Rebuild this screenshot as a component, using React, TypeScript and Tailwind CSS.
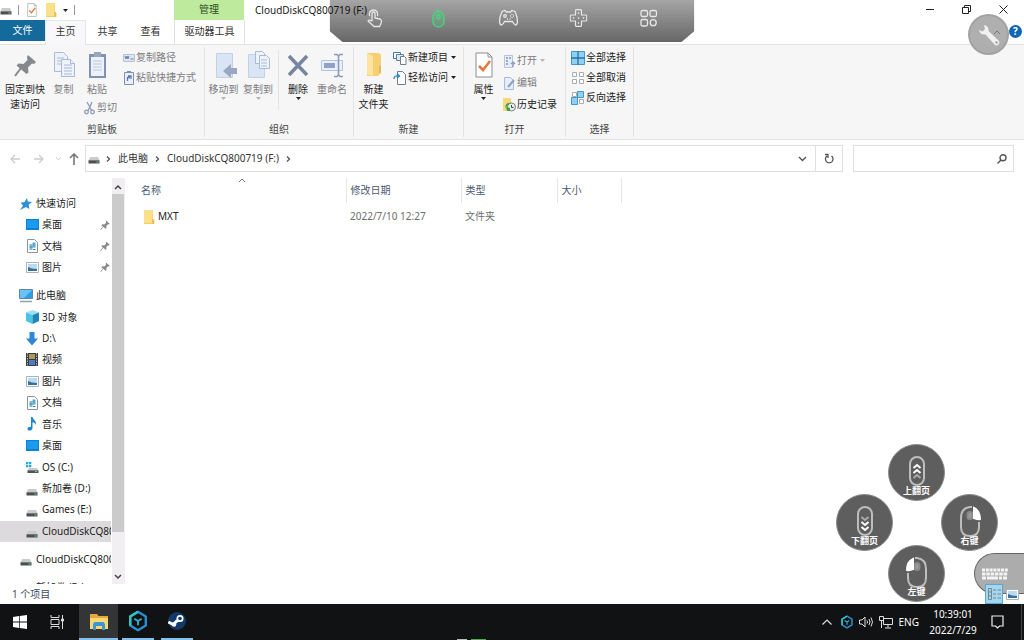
import type { ReactNode } from "react";

type IconProps = { className?: string };

/* ---------- icons ---------- */

const DriveIcon = ({ className = "w-3 h-3" }: IconProps) => (
  <svg viewBox="0 0 12 12" className={className}>
    <path d="M2 4h8l1.5 3.5h-11z" fill="#c9cccc" />
    <path d="M.5 7.3h11v3.2H.5z" fill="#4a4f52" />
    <path d="M8.5 9h2" stroke="#7fd18d" />
  </svg>
);

const OsDriveIcon = () => (
  <svg viewBox="0 0 13 13" className="w-[13px] h-[13px]">
    <path d="M0 1h2.3v2.3H0zM3 1h2.3v2.3H3zM0 4h2.3v2.3H0zM3 4h2.3v2.3H3z" fill="#1ca8d8" />
    <path d="M3 7h8l1.5 2.5h-11z" fill="#c9cccc" />
    <path d="M1.500 9.300h11V12h-11z" fill="#4c5558" />
    <path d="M9 10.600h2" stroke="#7fd18d" />
  </svg>
);

const FolderIcon = ({ className = "w-3 h-4" }: IconProps) => (
  <svg viewBox="0 0 12 16" className={className}>
    <path d="M1 1h9v9l1.500 1v4H1z" fill="#f3ce62" />
    <path d="M1 1h8.500v13H1z" fill="#fbe08a" />
    <path d="M10 10v5" stroke="#dfb244" />
  </svg>
);

const BigFolderIcon = () => (
  <svg viewBox="0 0 28 28" className="size-7">
    <path d="M7 2h12l2 2v18l-3 3H7z" fill="#f5cf72" />
    <path d="M7 2l6 3v21l-6-3z" fill="#fce3a0" />
    <path d="M19 15h2v7h-2z" fill="#e8b850" />
  </svg>
);

const CheckPageIcon = ({ className = "w-3 h-4" }: IconProps) => (
  <svg viewBox="0 0 18 26" className={className} fill="none">
    <path d="M1 1h12l4 4v20H1z" fill="#fff" stroke="#8a8d90" />
    <path d="M13 1v4h4" stroke="#8a8d90" />
    <path d="M4 14l4 4 7-9" stroke="#e07a3a" strokeWidth="2.500" />
  </svg>
);

const PinIcon = ({ className = "size-7" }: IconProps) => (
  <svg viewBox="0 0 28 28" className={className}>
    <path d="M17 4l8 7-2 2-2-.5-4 4 .5 5-2 1.500-10-8.500 2-2 5 .5 4-4-.500-3z" fill="#85898d" />
    <path d="M10 17l-6 8" stroke="#85898d" strokeWidth="2" />
  </svg>
);

const CopyIcon = () => (
  <svg viewBox="0 0 28 28" className="size-7" fill="#eef3fb" stroke="#a9b9d6">
    <path d="M4.500 1.500h9l4 4v15h-13z" />
    <path d="M7 7h7M7 10h7M7 13h4" />
    <path d="M11.500 8.500h9l4 4v13h-13z" />
    <path d="M20.500 8.500v4h4M14 14h8M14 17h8M14 20h8M14 23h8" />
  </svg>
);

const PasteIcon = () => (
  <svg viewBox="0 0 28 28" className="size-7">
    <path d="M6 3h17v24H6z" fill="#8093b4" />
    <path d="M8 6h13v19H8z" fill="#edf2fa" />
    <path d="M11 1h7v5h-7z" fill="#9aa7bd" />
    <path d="M10 10h9M10 13h9M10 16h9M10 19h9" stroke="#b8c8e2" />
  </svg>
);

const ScissorsIcon = () => (
  <svg viewBox="0 0 12 14" className="w-3 h-[14px]" fill="none" stroke="#8b9bb8" strokeWidth="1.300">
    <path d="M3 1l5 9M8 1L4 10" />
    <circle cx="2.500" cy="11" r="1.800" />
    <circle cx="8.500" cy="11" r="1.800" />
  </svg>
);

const PathIcon = () => (
  <svg viewBox="0 0 12 12" className="size-3">
    <path d="M.5 2.500h11v7H.5z" fill="#dce7f4" stroke="#b3c2d8" />
    <path d="M2 4l1 3 1-3 1 3 1-3M7.500 7h3" stroke="#6f83a5" fill="none" />
  </svg>
);

const ShortcutIcon = () => (
  <svg viewBox="0 0 12 14" className="w-3 h-[14px]">
    <path d="M1.500 1.500h9v12h-9z" fill="#e9f0fa" stroke="#7f90ad" />
    <path d="M4 0h4v2H4z" fill="#7f90ad" />
    <path d="M4.500 10V6.500H7M5 5h3v3" stroke="#5679b5" fill="none" strokeWidth="1.300" />
  </svg>
);

const MoveToIcon = () => (
  <svg viewBox="0 0 28 28" className="size-7">
    <path d="M6.500 2.500h16v24h-16z" fill="#d9e4f5" stroke="#c3d1e8" />
    <path d="M27 17v6h-6v4l-8-7 8-7v4z" fill="#98a8c4" />
  </svg>
);

const CopyToIcon = () => (
  <svg viewBox="0 0 28 28" className="size-7">
    <path d="M4.500 3.500h16v23h-16z" fill="#d9e4f5" stroke="#c3d1e8" />
    <g fill="#eef3fb" stroke="#a9b9d6">
      <path d="M11.500 .5h7l2 2v10h-9z" />
      <path d="M15.500 4.500h7l3 3v10h-10zM17 9h6M17 12h6M17 15h6" />
    </g>
  </svg>
);

const DeleteIcon = () => (
  <svg viewBox="0 0 28 28" className="size-7" stroke="#77869e" strokeWidth="3.500">
    <path d="M5 5l18 19M23 5L5 24" />
  </svg>
);

const RenameIcon = () => (
  <svg viewBox="0 0 28 28" className="size-7" fill="none">
    <path d="M3.500 9.500h21v10h-21z" fill="#e9f0fa" stroke="#b4c3dc" />
    <path d="M6 12h11v5H6z" fill="#8ea3c6" />
    <path d="M16 3.500h3l1.500 1.500 1.500-1.500h3M16 25.500h3l1.500-1.500 1.500 1.500h3M20.500 5v19" stroke="#8b9bb8" strokeWidth="1.600" />
  </svg>
);

const NewItemIcon = () => (
  <svg viewBox="0 0 14 14" className="size-[14px]" fill="#fff" stroke="#6b7f8f">
    <path d="M.5 1.500h7v6h-7z" stroke="#3f7fae" />
    <path d="M3.500 3.500h7v6h-7z" fill="#dceaf6" />
    <path d="M7.500 5.500h4l1.500 1.500v6.500H7.500z" />
  </svg>
);

const EasyAccessIcon = () => (
  <svg viewBox="0 0 14 14" className="size-[14px]" fill="#fff" stroke="#6b7f8f">
    <path d="M4.500 .5h5l3 3v10h-8z" />
    <path d="M1 8q0-4 5-3M4 2.500L6.500 5 4 7" stroke="#2f84c4" fill="none" strokeWidth="1.300" />
  </svg>
);

const OpenIcon = () => (
  <svg viewBox="0 0 13 14" className="w-[13px] h-[14px]">
    <path d="M1.500 1.500h8v12h-8z" fill="#e6eefa" stroke="#b6c5dd" />
    <path d="M3 4h2M3 7h2M3 10h2M6 4h2" stroke="#7e95bb" strokeWidth="1.500" />
    <path d="M10 13V8M8 10l2-2 2 2" stroke="#8ba0c2" fill="none" strokeWidth="1.500" />
  </svg>
);

const EditIcon = () => (
  <svg viewBox="0 0 13 14" className="w-[13px] h-[14px]">
    <path d="M1.500 1.500h6l3 3v9h-9z" fill="#e6eefa" stroke="#a8bbd8" />
    <path d="M5 11l6-7" stroke="#8ba0c2" strokeWidth="2" />
  </svg>
);

const HistoryIcon = () => (
  <svg viewBox="0 0 13 14" className="w-[13px] h-[14px]">
    <path d="M0 0h8v13H0z" fill="#f6d978" />
    <circle cx="8.500" cy="9" r="4" fill="#e7efe6" stroke="#77838a" />
    <path d="M2 10c1-5 3-5.500 6-4.500L8 4M3 9l4 1v3H4z" fill="#38a04c" />
    <path d="M8.500 7v2.500h2" stroke="#444" fill="none" />
  </svg>
);

const SelectAllIcon = () => (
  <svg viewBox="0 0 14 14" className="size-[14px]">
    <path d="M.5.5h13v13H.5z" fill="#8fd0f3" stroke="#4697c7" />
    <path d="M7 0v14M0 7h14" stroke="#2775a6" strokeWidth="1.300" />
  </svg>
);

const SelectNoneIcon = () => (
  <svg viewBox="0 0 14 14" className="size-[14px]" fill="#fff" stroke="#a6abb0">
    <path d="M1.500 1.500h4v4h-4zM8.500 1.500h4v4h-4zM1.500 8.500h4v4h-4zM8.500 8.500h4v4h-4z" />
  </svg>
);

const InvertIcon = () => (
  <svg viewBox="0 0 14 14" className="size-[14px]">
    <path d="M1.500 1.500h4v4h-4zM8.500 8.500h4v4h-4z" fill="#fff" stroke="#a6abb0" />
    <path d="M6.500.5h6v6h-6zM.5 6.500h6v7h-6z" fill="#8fd0f3" stroke="#4697c7" />
  </svg>
);

const StarIcon = () => (
  <svg viewBox="0 0 12 12" className="size-3">
    <path d="M7 0l.8 3.600 4.200.3-3.300 2.500.6 4.600-3.300-2L0 12l3-4.500L.5 4.700l4-.8z" fill="#2f8fd6" />
  </svg>
);

const DesktopIcon = () => (
  <svg viewBox="0 0 13 11" className="w-[13px] h-[11px]">
    <path d="M0 0h13v11H0z" fill="#0f7fd2" />
    <path d="M1 1h11v8H1z" fill="#1b9bf0" />
  </svg>
);

const DocIcon = () => (
  <svg viewBox="0 0 11 14" className="w-[11px] h-[14px]">
    <path d="M.5.5h7l3 3v10H.5z" fill="#fff" stroke="#8795a0" />
    <path d="M2.500 5h3v6h-3z" fill="#7dbce0" />
    <path d="M5.500 3.500h3v4h-3z" fill="#5aa6d2" />
    <path d="M2.500 8h6M6 10.500h2.500" stroke="#3f86b5" />
  </svg>
);

const PictureIcon = () => (
  <svg viewBox="0 0 13 11" className="w-[13px] h-[11px]">
    <path d="M.5.5h12v10H.5z" fill="#fff" stroke="#a9b3bb" />
    <path d="M2 2h9v7H2z" fill="#b9dcf2" />
    <path d="M2 5l4 1.500L11 7v2H2z" fill="#3b6f98" />
  </svg>
);

const ComputerIcon = () => (
  <svg viewBox="0 0 14 14" className="size-[14px]">
    <path d="M.5.5h13v9H.5z" fill="#2d9fe5" stroke="#5e87a5" />
    <path d="M1 1h12L5 9H1z" fill="#6cc2f4" />
    <path d="M1 12.500h12" stroke="#8da2b0" strokeWidth="1.500" />
  </svg>
);

const CubeIcon = () => (
  <svg viewBox="0 0 13 14" className="w-[13px] h-[14px]">
    <path d="M6.500 0L13 2.500 6.500 5 0 2.500z" fill="#9be0f2" />
    <path d="M0 2.500L6.500 5v9L0 11z" fill="#4cc3e2" />
    <path d="M13 2.500L6.500 5v9l6.500-3z" fill="#1b86b5" />
  </svg>
);

const DownloadIcon = () => (
  <svg viewBox="0 0 12 14" className="w-3 h-[14px]">
    <path d="M3.500 0h5v6.500H12l-6 7-6-7h3.500z" fill="#2f86d6" />
  </svg>
);

const VideoIcon = () => (
  <svg viewBox="0 0 12 13" className="w-3 h-[13px]">
    <path d="M0 0h12v13H0z" fill="#3b3b3f" />
    <path d="M3 1h6v5H3z" fill="#a99c58" />
    <path d="M3 7h6v5H3z" fill="#4e7cc4" />
    <path d="M1.500 0v13M10.500 0v13" stroke="#bdbdbd" strokeDasharray="1.500 1" />
  </svg>
);

const MusicIcon = () => (
  <svg viewBox="0 0 12 14" className="w-3 h-[14px]">
    <path d="M5 0h1.500c.5 3 4.500 3.500 3 8-.3-2-1.500-2.500-3-2.700V11c0 3-5 3.500-5 1 0-1.800 2-2.500 3.500-2z" fill="#1e86d0" />
  </svg>
);

const HexIcon = ({ className = "size-6" }: IconProps) => (
  <svg viewBox="0 0 24 24" className={className} fill="none" strokeLinejoin="round">
    <path d="M12 2l8.500 5v10L12 22l-8.500-5V7z" stroke="#2a8fd0" strokeWidth="2.600" />
    <path d="M3.500 17V7L12 2" stroke="#2fc6c0" strokeWidth="2.600" />
    <path d="M8 9.500l4 2.500 4-2.500M12 12v4.500" stroke="#2fb2c8" strokeWidth="2" />
  </svg>
);

const Chevron = ({ className = "w-[5px] h-2" }: IconProps) => (
  <svg viewBox="0 0 5 8" className={className} fill="none" stroke="#555" strokeWidth="1.300">
    <path d="M1 1.500L3.500 4 1 6.500" />
  </svg>
);

const Caret = ({ muted }: { muted?: boolean }) => (
  <svg viewBox="0 0 5 3" className={muted ? "w-[5px] h-[3px] fill-[#b5b5b8]" : "w-[5px] h-[3px] fill-[#222]"}>
    <path d="M0 0h5L2.500 3z" />
  </svg>
);

/* ---------- ribbon ---------- */

type BigButtonProps = {
  icon: ReactNode;
  lines: string[];
  muted?: boolean;
  caret?: boolean;
  className?: string;
};

function BigButton({ icon, lines, muted, caret, className = "w-[34px]" }: BigButtonProps) {
  return (
    <button className={`flex flex-col items-center shrink-0 ${muted ? "text-[#7c7c80]" : "text-[#222]"} ${className}`}>
      <span className="flex items-center justify-center h-[30px] mb-[2px]">{icon}</span>
      {lines.map((line) => (
        <span key={line} className="whitespace-nowrap">
          {line}
        </span>
      ))}
      {caret && <Caret muted={muted} />}
    </button>
  );
}

type SmallButtonProps = { icon: ReactNode; label: string; muted?: boolean; caret?: boolean };

function SmallButton({ icon, label, muted, caret }: SmallButtonProps) {
  return (
    <button className={`flex items-center gap-[1px] whitespace-nowrap ${muted ? "text-[#7c7c80]" : "text-[#222]"}`}>
      {icon}
      {label}
      {caret && (
        <span className="ml-[2px]">
          <Caret muted={muted} />
        </span>
      )}
    </button>
  );
}

function Group({ title, className, children }: { title: string; className: string; children: ReactNode }) {
  return (
    <section className={`flex flex-col shrink-0 border-r border-[#e1e3e5] mt-[2px] mb-[2px] ${className}`}>
      <div className="flex flex-1 pt-[3px]">{children}</div>
      <h2 className="text-center text-[#444]">{title}</h2>
    </section>
  );
}

function Ribbon() {
  return (
    <div className="flex h-24 bg-[#f6f6f7] border-y border-[#dfe4e6]">
      <Group title="剪贴板" className="w-[205px]">
        <BigButton className="w-[50px]" icon={<PinIcon />} lines={["固定到快", "速访问"]} />
        <BigButton className="w-[27px]" muted icon={<CopyIcon />} lines={["复制"]} />
        <div className="flex flex-col items-start w-[43px] gap-[3px] pl-[7px]">
          <BigButton className="w-[26px]" muted icon={<PasteIcon />} lines={["粘贴"]} />
          <SmallButton muted icon={<ScissorsIcon />} label="剪切" />
        </div>
        <div className="flex flex-col gap-[5px] pl-[3px]">
          <SmallButton muted icon={<PathIcon />} label="复制路径" />
          <SmallButton muted icon={<ShortcutIcon />} label="粘贴快捷方式" />
        </div>
      </Group>
      <Group title="组织" className="w-[149px]">
        <BigButton className="w-[37px]" muted caret icon={<MoveToIcon />} lines={["移动到"]} />
        <BigButton className="w-[32px]" muted caret icon={<CopyToIcon />} lines={["复制到"]} />
        <div className="flex ml-1 pl-[2px] mb-3 border-l border-[#e1e3e5]">
          <BigButton caret icon={<DeleteIcon />} lines={["删除"]} />
          <BigButton muted icon={<RenameIcon />} lines={["重命名"]} />
        </div>
      </Group>
      <Group title="新建" className="w-[110px]">
        <BigButton className="w-[39px]" icon={<BigFolderIcon />} lines={["新建", "文件夹"]} />
        <div className="flex flex-col gap-[5px]">
          <SmallButton caret icon={<NewItemIcon />} label="新建项目" />
          <SmallButton caret icon={<EasyAccessIcon />} label="轻松访问" />
        </div>
      </Group>
      <Group title="打开" className="w-[102px]">
        <BigButton caret className="w-[39px]" icon={<CheckPageIcon className="w-[18px] h-[26px]" />} lines={["属性"]} />
        <div className="flex flex-col gap-[7px] pt-[3px]">
          <SmallButton muted caret icon={<OpenIcon />} label="打开" />
          <SmallButton muted icon={<EditIcon />} label="编辑" />
          <SmallButton icon={<HistoryIcon />} label="历史记录" />
        </div>
      </Group>
      <Group title="选择" className="w-[68px]">
        <div className="flex flex-col gap-[5px] pl-[5px]">
          <SmallButton icon={<SelectAllIcon />} label="全部选择" />
          <SmallButton icon={<SelectNoneIcon />} label="全部取消" />
          <SmallButton icon={<InvertIcon />} label="反向选择" />
        </div>
      </Group>
    </div>
  );
}

/* ---------- header ---------- */

function TitleBar() {
  return (
    <header className="flex h-5">
      <div className="flex items-center w-[174px] gap-[6px]">
        <DriveIcon />
        <span className="w-px h-[10px] bg-[#999]" />
        <CheckPageIcon className="w-[14px] h-[14px]" />
        <FolderIcon />
        <Caret />
        <span className="w-px h-[10px] bg-[#999]" />
      </div>
      <div className="flex items-center justify-center w-[70px] bg-[#bdea9c] text-[#2c4a1c] pb-[2px]">管理</div>
      <h1 className="flex-1 pl-[11px] leading-5 text-[#222]">CloudDiskCQ800719 (F:)</h1>
      <div className="flex pr-[2px] pb-[2px]">
        <button aria-label="最小化" className="flex items-center justify-center w-[37px]">
          <svg viewBox="0 0 8 8" className="size-2" stroke="#222">
            <path d="M0 4.500h8" />
          </svg>
        </button>
        <button aria-label="还原" className="flex items-center justify-center w-[37px]">
          <svg viewBox="0 0 9 9" className="size-[9px]" stroke="#222" fill="none">
            <path d="M.5 2.500h6v6h-6zM2.500 2V.5h6v6H7" />
          </svg>
        </button>
        <button aria-label="关闭" className="flex items-center justify-center w-[37px]">
          <svg viewBox="0 0 9 9" className="size-[9px]" stroke="#222">
            <path d="M.5.5l8 8M8.500.5l-8 8" />
          </svg>
        </button>
      </div>
    </header>
  );
}

function Tabs() {
  return (
    <nav className="flex h-6 text-[#333]">
      <button className="w-[45px] h-[21px] bg-[#136a9b] text-white">文件</button>
      <button className="w-[41px] h-[25px] pb-1 relative bg-[#f8f8fa] border border-b-0 border-[#e3e6ea]">主页</button>
      <button className="w-[43px] pb-[2px]">共享</button>
      <button className="w-[43px] pb-[2px]">查看</button>
      <button className="w-[71px] ml-[2px] pb-[2px] border-x border-[#dde3dc]">驱动器工具</button>
      <button aria-label="帮助" className="flex items-center justify-center size-[13px] mt-[5px] mr-[2px] ml-auto rounded-full bg-[#0f64b4] text-white font-bold">
        ?
      </button>
    </nav>
  );
}

function AddressBar() {
  return (
    <div className="flex h-[27px] mt-[5px] pr-[10px]">
      <div className="flex items-center w-[85px] pl-[10px] gap-3">
        <button aria-label="后退">
          <svg viewBox="0 0 11 10" className="w-[11px] h-[10px]" fill="none" stroke="#ccc" strokeWidth="1.300">
            <path d="M10 5H1M5 1L1 5l4 4" />
          </svg>
        </button>
        <button aria-label="前进">
          <svg viewBox="0 0 11 10" className="w-[11px] h-[10px]" fill="none" stroke="#ccc" strokeWidth="1.300">
            <path d="M1 5h9M6 1l4 4-4 4" />
          </svg>
        </button>
        <svg viewBox="0 0 5 4" className="w-[5px] h-1" fill="none" stroke="#ccc">
          <path d="M0 0l2.500 3L5 0" />
        </svg>
        <button aria-label="向上" className="-ml-1">
          <svg viewBox="0 0 10 12" className="w-[10px] h-3" fill="none" stroke="#777" strokeWidth="1.600">
            <path d="M5 12V1M1 5l4-4 4 4" />
          </svg>
        </button>
      </div>
      <div className="flex items-center flex-1 min-w-0 border border-[#dfdfe1] pl-[2px] text-[#333]">
        <DriveIcon />
        <span className="flex items-center gap-[7px] pl-[6px] whitespace-nowrap">
          <Chevron />
          <button>此电脑</button>
          <Chevron />
          <button>CloudDiskCQ800719 (F:)</button>
          <Chevron />
        </span>
        <button aria-label="历史位置" className="ml-auto mr-2">
          <svg viewBox="0 0 9 6" className="w-[9px] h-[6px]" fill="none" stroke="#555" strokeWidth="1.400">
            <path d="M1 1l3.500 3.500L8 1" />
          </svg>
        </button>
        <button aria-label="刷新" className="flex items-center justify-center w-[27px] h-full border-l border-[#dfdfe1]">
          <svg viewBox="0 0 10 11" className="w-[10px] h-[11px]" fill="none" stroke="#555" strokeWidth="1.300">
            <path d="M7.500 3a3.800 3.800 0 1 1-4.500 0M1 1.500h3V5" />
          </svg>
        </button>
      </div>
      <label className="flex items-center w-[161px] ml-[10px] pr-[6px] border border-[#dfdfe1]">
        <input type="text" aria-label="搜索" className="flex-1 min-w-0 h-full px-2 outline-none" />
        <svg viewBox="0 0 10 10" className="size-[10px]" fill="none" stroke="#555" strokeWidth="1.400">
          <circle cx="6" cy="3.800" r="3" />
          <path d="M4 6L.5 9.500" />
        </svg>
      </label>
    </div>
  );
}

/* ---------- sidebar ---------- */

type Entry = { label: string; icon: ReactNode; pinned?: boolean; root?: boolean; active?: boolean };

const quickAccess: Entry[] = [
  { label: "快速访问", icon: <StarIcon />, root: true },
  { label: "桌面", icon: <DesktopIcon />, pinned: true },
  { label: "文档", icon: <DocIcon />, pinned: true },
  { label: "图片", icon: <PictureIcon />, pinned: true },
];

const thisPc: Entry[] = [
  { label: "此电脑", icon: <ComputerIcon />, root: true },
  { label: "3D 对象", icon: <CubeIcon /> },
  { label: "D:\\", icon: <DownloadIcon /> },
  { label: "视频", icon: <VideoIcon /> },
  { label: "图片", icon: <PictureIcon /> },
  { label: "文档", icon: <DocIcon /> },
  { label: "音乐", icon: <MusicIcon /> },
  { label: "桌面", icon: <DesktopIcon /> },
  { label: "OS (C:)", icon: <OsDriveIcon /> },
  { label: "新加卷 (D:)", icon: <DriveIcon className="w-3 h-3 mt-1" /> },
  { label: "Games (E:)", icon: <DriveIcon className="w-3 h-3 mt-1" /> },
  { label: "CloudDiskCQ800719 (F:)", icon: <DriveIcon className="w-3 h-3 mt-1" />, active: true },
];

const drives: Entry[] = [
  { label: "CloudDiskCQ800719 (F:)", icon: <DriveIcon className="w-3 h-3 mt-1" />, root: true },
];

const moreDrives: Entry[] = [{ label: "新加卷 (D:)", icon: null, root: true }];

function Tree({ entries, className }: { entries: Entry[]; className: string }) {
  return (
    <ul className={`flex flex-col shrink-0 ${className}`}>
      {entries.map((entry) => (
        <li key={entry.label} className={`flex flex-1 ${entry.active ? "bg-[#dcdadc]" : ""}`}>
          <button className={`flex items-center flex-1 min-w-0 text-left ${entry.root ? "pl-[18px]" : "pl-6"}`}>
            <span className="flex items-center justify-center w-4 shrink-0">{entry.icon}</span>
            <span className="flex-1 pl-[2px] overflow-hidden whitespace-nowrap">{entry.label}</span>
            {entry.pinned && <PinIcon className="size-3" />}
          </button>
        </li>
      ))}
    </ul>
  );
}

function Sidebar() {
  return (
    <aside className="flex w-[125px] shrink-0 border-r border-[#f0f0f2] text-[#222]">
      <div className="flex flex-col w-[112px] pt-[15px] pr-[1px] overflow-hidden">
        <Tree entries={quickAccess} className="h-[85px]" />
        <Tree entries={thisPc} className="h-[257px] mt-[7px]" />
        <Tree entries={drives} className="h-[22px] mt-[6px]" />
        <Tree entries={moreDrives} className="h-[22px] mt-[6px]" />
      </div>
      <div className="flex flex-col items-center w-3 bg-[#f1eff2]">
        <svg viewBox="0 0 8 16" className="w-2 h-4 shrink-0" fill="none" stroke="#444" strokeWidth="1.500">
          <path d="M1 11l3-3 3 3" />
        </svg>
        <span className="w-full flex-1 bg-[#cbcbcc]" />
        <span className="h-9 shrink-0" />
        <svg viewBox="0 0 8 16" className="w-2 h-4 shrink-0" fill="none" stroke="#444" strokeWidth="1.500">
          <path d="M1 7l3 3 3-3" />
        </svg>
      </div>
    </aside>
  );
}

/* ---------- files ---------- */

const files = [{ name: "MXT", modified: "2022/7/10 12:27", type: "文件夹", size: "" }];

function FileList() {
  return (
    <main className="flex-1 min-w-0">
      <table className="table-fixed w-[496px] text-left">
        <thead className="text-[#4c5a70]">
          <tr className="h-[25px]">
            <th className="relative w-[221px] pl-4 font-normal border-r border-[#e4e6e8]">
              名称
              <svg viewBox="0 0 8 5" className="absolute top-0 right-[100px] w-2 h-[5px]" fill="none" stroke="#777">
                <path d="M1 4l3-3 3 3" />
              </svg>
            </th>
            <th className="w-[115px] pl-1 font-normal border-r border-[#e4e6e8]">修改日期</th>
            <th className="w-24 pl-1 font-normal border-r border-[#e4e6e8]">类型</th>
            <th className="w-16 pl-1 font-normal border-r border-[#e4e6e8]">大小</th>
          </tr>
        </thead>
        <tbody className="text-[#6d6d6d]">
          {files.map((file) => (
            <tr key={file.name} className="h-[27px]">
              <td className="pl-[18px] text-[#222]">
                <button className="flex items-center gap-[3px]">
                  <FolderIcon />
                  {file.name}
                </button>
              </td>
              <td className="pl-1">{file.modified}</td>
              <td className="pl-1">{file.type}</td>
              <td className="pl-1">{file.size}</td>
            </tr>
          ))}
        </tbody>
      </table>
    </main>
  );
}

function StatusBar() {
  return (
    <footer className="relative z-10 flex items-center justify-between h-5 pl-3 pr-[5px] text-[#3c4a66]">
      <span>1 个项目</span>
      <div className="flex items-center gap-[3px]">
        <button aria-label="详细信息" className="flex items-center justify-center w-[18px] h-5 bg-[#a5d6ee] border border-[#5aa9d2]">
          <svg viewBox="0 0 13 12" className="w-[13px] h-3" fill="none" stroke="#6d8899">
            <path d="M.5.5h3v11h-3zM.5 4h3M.5 8h3M5 2h3M9.500 2H13M5 6h3M9.500 6H13M5 10h3M9.500 10H13" />
          </svg>
        </button>
        <button aria-label="大图标">
          <PictureIcon />
        </button>
      </div>
    </footer>
  );
}

/* ---------- taskbar ---------- */

function Taskbar() {
  return (
    <footer className="relative flex h-9 bg-[#111213] text-white">
      <button aria-label="开始" className="flex items-center justify-center w-[39px]">
        <svg viewBox="0 0 14 14" className="size-[14px]" fill="#fff">
          <path d="M0 2l6-1v5.600H0zM6.700.9L14 0v6.600H6.700zM0 7.400h6V13l-6-1zM6.700 7.400H14V14l-7.300-1z" />
        </svg>
      </button>
      <button aria-label="任务视图" className="flex items-center justify-center w-9 mr-1">
        <svg viewBox="0 0 14 14" className="size-[14px]" fill="none" stroke="#ddd">
          <path d="M1 0v2.500h8V0M1 14v-2.500h8V14M1 4.500h8v5H1zM12.500 0v14M11.500 4h2v2h-2z" />
        </svg>
      </button>
      <button aria-label="文件资源管理器" className="flex items-center justify-center w-[39px] bg-[#333536] border-b-2 border-[#83c1ee]">
        <svg viewBox="0 0 18 17" className="w-[18px] h-[17px]">
          <path d="M0 1h7l1.500 2H18v13H0z" fill="#e5a93a" />
          <path d="M0 5h18v11H0z" fill="#fbd773" />
          <path d="M3 17v-6l1.500-2h9l1.500 2v6h-3v-4H6v4z" fill="#3c96d4" />
        </svg>
      </button>
      <button aria-label="云电脑" className="flex items-center justify-center w-8 mx-1 border-b-2 border-[#83c1ee]">
        <HexIcon className="size-[22px]" />
      </button>
      <button aria-label="Steam" className="flex items-center justify-center w-8 ml-[3px] border-b-2 border-[#83c1ee]">
        <svg viewBox="0 0 18 18" className="size-[18px]">
          <circle cx="9" cy="9" r="9" fill="#123a68" />
          <path d="M.3 10l5 2.500 3-3 3.700-2" stroke="#fff" strokeWidth="3" fill="none" />
          <circle cx="12" cy="6.500" r="3.500" fill="#fff" />
          <circle cx="12" cy="6.500" r="1.800" fill="#123a68" />
          <circle cx="6" cy="12.500" r="2.300" fill="#fff" />
        </svg>
      </button>
      <div className="flex items-center ml-auto pr-[2px]">
        <svg viewBox="0 0 10 6" className="w-[10px] h-[6px] mr-2" fill="none" stroke="#ddd" strokeWidth="1.200">
          <path d="M.5 5.500L5 1l4.500 4.500" />
        </svg>
        <HexIcon className="size-[14px] mr-[5px]" />
        <svg viewBox="0 0 14 12" className="w-[14px] h-3 mr-[6px]" fill="none" stroke="#ddd">
          <path d="M.5 4h2.500L6 1v10L3 8H.5zM8 4.500q1 1.500 0 3M10 3q2 3 0 6M12 1.500q3 4.500 0 9" />
        </svg>
        <svg viewBox="0 0 14 13" className="w-[14px] h-[13px] mr-[6px]" fill="none" stroke="#ddd">
          <path d="M4.500 2.500h9v6h-9zM9 8.500v3M6 12h6M.5.5h4v4h-4zM2.500 4.500V12" />
        </svg>
        <span className="mr-[9px] leading-9">ENG</span>
        <time className="w-[50px] text-center leading-4">
          10:39:01
          <br />
          2022/7/29
        </time>
        <button aria-label="通知" className="ml-[13px] mr-[17px]">
          <svg viewBox="0 0 13 14" className="w-[13px] h-[14px]" fill="none" stroke="#eee" strokeWidth="1.200">
            <path d="M1 1h11v10H8.500l-2 2-2-2H1z" />
          </svg>
        </button>
        <span className="w-px h-9 bg-[#444]" />
      </div>
      <span className="absolute bottom-0 left-[457px] w-[10px] h-px bg-[#bbb]" />
      <span className="absolute bottom-0 left-[471px] w-[15px] h-px bg-[#4fae4a]" />
    </footer>
  );
}

/* ---------- touch overlay ---------- */

function ModeBar() {
  return (
    <div className="absolute top-0 left-1/2 flex items-center justify-end gap-[50px] w-[365px] h-[42px] pr-9 pb-[7px] -translate-x-1/2 bg-linear-to-b from-black/35 to-black/60 [clip-path:polygon(0_0,100%_0,100%_31px,calc(100%-13px)_100%,13px_100%,0_31px)]">
      <button aria-label="触控" className="-mr-1">
        <svg viewBox="0 0 16 20" className="w-4 h-5" fill="none" stroke="#e8e8e8" strokeWidth="1.300" strokeLinecap="round" strokeLinejoin="round">
          <path d="M5.500 12.500V5.500a1.500 1.500 0 0 1 3 0v4.500l5 1q1.500.5 1.500 2.500-.5 3-2 5H7.500L1.500 13q1-1.800 4 0" />
          <path d="M3 7.500a4.200 4.200 0 1 1 8 0" />
        </svg>
      </button>
      <button aria-label="鼠标" className="flex justify-center w-5">
        <svg viewBox="0 0 14 20" className="w-[14px] h-5" fill="none" stroke="#45d97c" strokeWidth="1.300">
          <rect x="1.500" y="3.500" width="11" height="15.500" rx="5.500" fill="#45d97c" fillOpacity=".25" />
          <path d="M7 3.500L5.500 .5" />
          <rect x="5.500" y="6.500" width="3" height="4.500" rx="1.500" />
        </svg>
      </button>
      <button aria-label="手柄" className="flex justify-center w-5">
        <svg viewBox="0 0 20 18" className="w-5 h-[18px]" fill="none" stroke="#e8e8e8" strokeWidth="1.300">
          <path d="M6.500 1.500L8 3h4l1.500-1.500 3 1q2.500 5 2.500 11-1.500 5.500-5-1H6Q2.500 19 1 13.500 1 7.500 3.500 2.500z" />
          <circle cx="6.500" cy="7" r="1.300" />
          <path d="M13.500 5v1M13.500 8v1M11.500 7h1M14.500 7h1M8.500 10h1M11 10h1" />
        </svg>
      </button>
      <button aria-label="方向键" className="flex justify-center w-5">
        <svg viewBox="0 0 18 18" className="size-[18px]" fill="none" stroke="#e8e8e8" strokeWidth="1.200" strokeLinejoin="round">
          <path d="M7 .7h4q1 0 1 1V6h4.300q1 0 1 1v4q0 1-1 1H12v4.300q0 1-1 1H7q-1 0-1-1V12H1.700q-1 0-1-1V7q0-1 1-1H6V1.700q0-1 1-1z" />
          <path d="M8.300 4h1.400M8.300 14h1.400M3.300 9h1.400M13.300 9h1.400M8.300 9h1.400" strokeWidth="1.500" />
        </svg>
      </button>
      <button aria-label="更多" className="flex justify-center w-5">
        <svg viewBox="0 0 18 18" className="size-[18px]" fill="none" stroke="#e8e8e8" strokeWidth="1.300">
          <rect x="1.500" y="1.500" width="6.500" height="6" rx="1.500" />
          <rect x="10.500" y="1.500" width="6.500" height="6" rx="1.500" />
          <rect x="1.500" y="10.500" width="6.500" height="6.500" rx="1.500" />
          <circle cx="13.700" cy="13.700" r="3" />
        </svg>
      </button>
    </div>
  );
}

const pill = "M11 2a7 7 0 0 1 7 7v14a7 7 0 0 1-14 0V9a7 7 0 0 1 7-7z";

const mousePad = [
  {
    label: "上翻页",
    place: "top-0 left-[52px]",
    art: (
      <>
        <path d={pill} />
        <path d="M7.500 13l3.500-3 3.500 3M7.500 18l3.500-3 3.500 3" stroke="#fff" />
        <path d="M7.500 23l3.500-3 3.500 3" stroke="#aaa" />
      </>
    ),
  },
  {
    label: "下翻页",
    place: "top-[50px] left-0",
    art: (
      <>
        <path d={pill} />
        <path d="M7.500 12l3.500 3 3.500-3" stroke="#aaa" />
        <path d="M7.500 17l3.500 3 3.500-3M7.500 22l3.500 3 3.500-3" stroke="#fff" />
      </>
    ),
  },
  {
    label: "右键",
    place: "top-[50px] right-0",
    art: (
      <>
        <path d="M13 2h-2q-9 1-9 11v9q0 9 9 9t9-9v-5" />
        <rect x="8.500" y="7" width="5" height="7" rx="2.500" fill="#999" stroke="#8a8a8a" />
        <path d="M15 3q6 3 6 11-1 1-6-1z" fill="#fff" stroke="#fff" />
      </>
    ),
  },
  {
    label: "左键",
    place: "bottom-0 left-[52px]",
    art: (
      <>
        <path d="M9 2h2q9 1 9 11v9q0 9-9 9t-9-9v-5" />
        <rect x="8.500" y="7" width="5" height="7" rx="2.500" fill="#999" stroke="#8a8a8a" />
        <path d="M7 3Q1 6 1 14q1 1 6-1z" fill="#fff" stroke="#fff" />
      </>
    ),
  },
];

function MousePad() {
  return (
    <div className="absolute right-[26px] bottom-[38px] w-[162px] h-[158px]">
      {mousePad.map(({ label, place, art }) => (
        <button key={label} className={`absolute flex flex-col items-center size-[57px] pt-[10px] rounded-full bg-[#5e5e5e] border border-[#8a8a8a] text-white font-bold text-[9px] leading-[11px] ${place}`}>
          <svg viewBox="0 0 22 33" className="w-[22px] h-[33px] -mb-[3px]" fill="none" stroke="#bdbdbd" strokeWidth="2">
            {art}
          </svg>
          <span className="relative">{label}</span>
        </button>
      ))}
    </div>
  );
}

function Overlay() {
  return (
    <>
      <ModeBar />
      <button aria-label="工具" className="absolute top-[14px] right-[15px] flex items-center justify-center size-[41px] rounded-full bg-[#a6a6a6]/90 border-2 border-[#999]/60">
        <svg viewBox="0 0 22 22" className="size-[22px]">
          <path d="M6 1q5 1 4.500 6L21 17q1 2-.500 3.500t-3.500.5L7.500 10.500Q2 11 1 6l3.500 1.500L7 5z" fill="#f1f1f1" />
          <circle cx="18.500" cy="18.500" r="1.200" fill="#a0a0a0" />
          <path d="M16 10l3-3 3 3" fill="none" stroke="#777" />
        </svg>
      </button>
      <MousePad />
      <button aria-label="键盘" className="absolute right-0 bottom-[46px] flex items-center w-[50px] h-[41px] pl-[7px] rounded-l-[21px] bg-[#808080]/65 border border-r-0 border-[#666]">
        <svg viewBox="0 0 26 12" className="w-[26px] h-3" stroke="#f4f4f4" strokeWidth="2.800">
          <path d="M0 2h26" strokeDasharray="3 .8" />
          <path d="M0 6h26" strokeDasharray="3.500 .8" />
          <path d="M0 10h4M5 10h11M17 10h3M21 10h4" />
        </svg>
      </button>
    </>
  );
}

export default function App() {
  return (
    <div className="relative flex flex-col h-screen overflow-hidden bg-white text-[10px] leading-[15px] font-['Noto_Sans','Noto_Sans_CJK_SC',sans-serif]">
      <TitleBar />
      <Tabs />
      <Ribbon />
      <AddressBar />
      <div className="flex flex-1 min-h-0 mt-[6px]">
        <Sidebar />
        <FileList />
      </div>
      <StatusBar />
      <Taskbar />
      <Overlay />
    </div>
  );
}
